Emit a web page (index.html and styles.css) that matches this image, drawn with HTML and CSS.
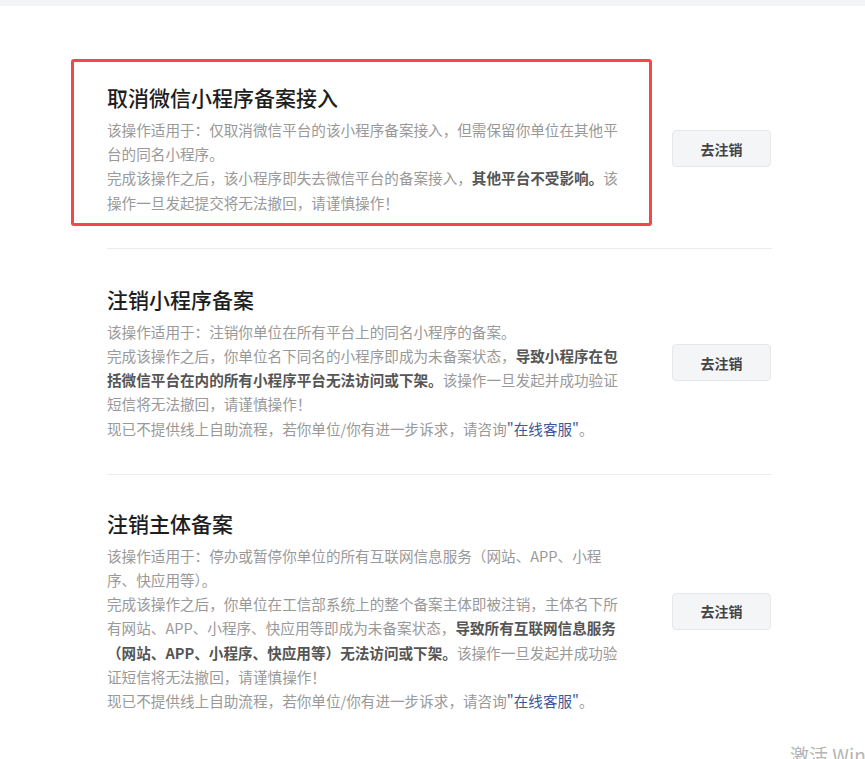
FILE: index.html
```html
<!DOCTYPE html>
<html lang="zh-CN">
<head>
<meta charset="utf-8">
<title>注销</title>
<link rel="stylesheet" href="styles.css">
</head>
<body>
<div class="topbar"></div>
<main class="list">
  <section class="item item-highlight">
    <div class="item-text">
      <h2 class="item-title">取消微信小程序备案接入</h2>
      <p class="desc">该操作适用于：仅取消微信平台的该小程序备案接入，但需保留你单位在其他平台的同名小程序。</p>
      <p class="desc">完成该操作之后，该小程序即失去微信平台的备案接入，<b class="strong">其他平台不受影响。</b>该操作一旦发起提交将无法撤回，请谨慎操作！</p>
    </div>
    <button class="btn">去注销</button>
  </section>
  <section class="item">
    <div class="item-text">
      <h2 class="item-title">注销小程序备案</h2>
      <p class="desc">该操作适用于：注销你单位在所有平台上的同名小程序的备案。</p>
      <p class="desc">完成该操作之后，你单位名下同名的小程序即成为未备案状态，<b class="strong">导致小程序在包括微信平台在内的所有小程序平台无法访问或下架。</b>该操作一旦发起并成功验证短信将无法撤回，请谨慎操作！</p>
      <p class="desc">现已不提供线上自助流程，若你单位/你有进一步诉求，请咨询<a class="link">"在线客服"</a>。</p>
    </div>
    <button class="btn">去注销</button>
  </section>
  <section class="item">
    <div class="item-text">
      <h2 class="item-title">注销主体备案</h2>
      <p class="desc">该操作适用于：停办或暂停你单位的所有互联网信息服务（网站、APP、小程序、快应用等）。</p>
      <p class="desc">完成该操作之后，你单位在工信部系统上的整个备案主体即被注销，主体名下所有网站、APP、小程序、快应用等即成为未备案状态，<b class="strong">导致所有互联网信息服务（网站、APP、小程序、快应用等）无法访问或下架。</b>该操作一旦发起并成功验证短信将无法撤回，请谨慎操作！</p>
      <p class="desc">现已不提供线上自助流程，若你单位/你有进一步诉求，请咨询<a class="link">"在线客服"</a>。</p>
    </div>
    <button class="btn">去注销</button>
  </section>
</main>
<div class="watermark">激活 Windows</div>
</body>
</html>
```

FILE: styles.css
```css
html, body {
  margin: 0;
  padding: 0;
  background: #ffffff;
  font-family: "Noto Sans CJK SC", "Microsoft YaHei", sans-serif;
  overflow: hidden;
  height: 759px;
}

.topbar {
  height: 6px;
  background: #f3f4f6;
}

.list {
  width: 665px;
  margin-left: 107px;
  padding-top: 41px;
}

.item {
  position: relative;
  display: flex;
  align-items: center;
  gap: 52px;
  padding: 36px 0 33px;
  border-bottom: 1px solid #ececec;
}

.item:last-child {
  border-bottom: none;
  padding-top: 34px;
}

.item-highlight::before {
  content: "";
  position: absolute;
  left: -36px;
  top: 12px;
  width: 575px;
  height: 161px;
  border: 3px solid #f2474d;
  border-radius: 3px;
  pointer-events: none;
}

.item-text {
  width: 513px;
  flex: none;
}

.item-title {
  margin: 0 0 7px;
  font-size: 21px;
  line-height: 28px;
  font-weight: 500;
  color: #1e1e1e;
}

.desc {
  margin: 0;
  font-size: 14.6px;
  line-height: 24.2px;
  color: #999999;
}

.strong {
  font-weight: 700;
  color: #555555;
}

.link {
  color: #3b5998;
  text-decoration: none;
}

.btn {
  flex: none;
  width: 99px;
  height: 37px;
  padding: 0;
  background: #f4f5f7;
  border: 1px solid #e6e7ea;
  border-radius: 4px;
  font-family: inherit;
  font-size: 14px;
  font-weight: 700;
  color: #444444;
}

.watermark {
  position: absolute;
  left: 790px;
  top: 741px;
  font-size: 19px;
  color: #b5b5b5;
  white-space: nowrap;
}
```
